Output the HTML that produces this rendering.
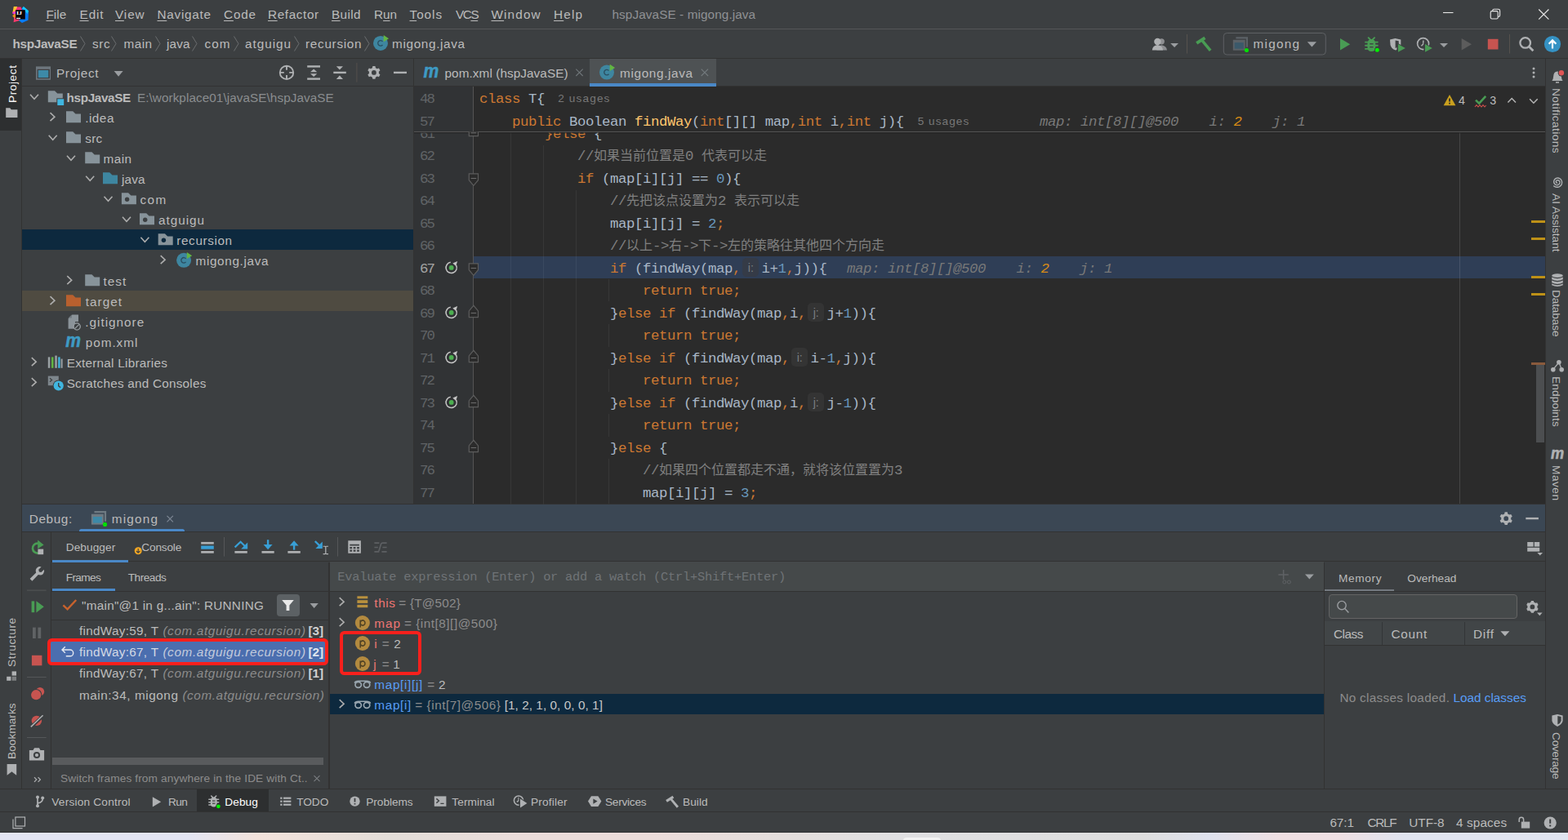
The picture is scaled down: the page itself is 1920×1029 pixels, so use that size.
<!DOCTYPE html><html><head><meta charset="utf-8"><title>hspJavaSE - migong.java</title><style>

html,body{margin:0;padding:0;background:#3c3f41;}
#r{position:relative;width:1920px;height:1029px;overflow:hidden;background:#3c3f41;font-family:"Liberation Sans",sans-serif;color:#bbb;}
#r div,#r svg,#r .t{position:absolute;}
.t{white-space:pre;line-height:20px;height:20px;}
.cjt{font-family:"Liberation Mono","Noto Sans CJK SC",monospace;font-size:16px;letter-spacing:0;}
u{text-decoration:underline;text-underline-offset:2px;text-decoration-thickness:1px;}

</style></head><body><div id="r">
<div style="left:0px;top:35px;width:1920px;height:1px;background:#555759;"></div>
<div style="left:0px;top:71px;width:1920px;height:1px;background:#323232;"></div>
<div style="left:0px;top:72px;width:26px;height:895px;background:#3c3f41;"></div>
<div style="left:26px;top:72px;width:1px;height:895px;background:#323232;"></div>
<div style="left:0px;top:72px;width:26px;height:88px;background:#2d2f30;"></div>
<div style="left:1892px;top:72px;width:1px;height:895px;background:#323232;"></div>
<div style="left:27px;top:105px;width:480px;height:1px;background:#323232;"></div>
<div style="left:506px;top:72px;width:1px;height:546px;background:#323232;"></div>
<div style="left:507px;top:106px;width:1385px;height:512px;background:#2b2b2b;"></div>
<div style="left:507px;top:106px;width:73px;height:512px;background:#313335;"></div>
<div style="left:579px;top:106px;width:1px;height:512px;background:#555555;"></div>
<div style="left:507px;top:105px;width:1385px;height:1px;background:#323232;"></div>
<div style="left:722px;top:72px;width:155px;height:34px;background:#4e5254;"></div>
<div style="left:722px;top:102px;width:155px;height:4px;background:#4a88c7;"></div>
<div style="left:1787px;top:162px;width:1px;height:456px;background:#464646;"></div>
<div style="left:1787px;top:314px;width:1px;height:27px;background:#47536a;z-index:2;"></div>
<div style="left:27px;top:617px;width:1866px;height:1px;background:#323232;"></div>
<div style="left:27px;top:618px;width:1865px;height:33px;background:#3b4754;"></div>
<div style="left:27px;top:651px;width:1865px;height:1px;background:#323232;"></div>
<div style="left:62px;top:652px;width:1px;height:315px;background:#323232;"></div>
<div style="left:63px;top:687px;width:1829px;height:1px;background:#323232;"></div>
<div style="left:402px;top:689px;width:2px;height:278px;background:#323232;"></div>
<div style="left:1621px;top:689px;width:1px;height:278px;background:#323232;"></div>
<div style="left:0px;top:966px;width:1920px;height:1px;background:#323232;"></div>
<div style="left:0px;top:994px;width:1920px;height:1px;background:#323232;"></div>
<div style="left:0px;top:1020px;width:1920px;height:9px;background:linear-gradient(90deg,#e3e5f3 0.00%,#e3e5f3 11.98%,#f3e2db 16.41%,#e3ddd8 25.00%,#ebdcda 33.33%,#ecdcda 41.67%,#e4dedc 50.00%,#e0e0e2 57.29%,#dedede 72.92%,#dfe2ee 77.08%,#f0dfe2 81.77%,#efdfe3 85.42%,#e0e4f0 89.58%,#e0e4f0 100.00%);"></div>
<div style="left:0px;top:1019px;width:1920px;height:1px;background:#2f3133;"></div>
<div style="left:1105.6px;top:1026.3px;width:46.4px;height:4px;background:#f3f3f3;border-radius:4px 4px 0 0;"></div>
<span class="t" style="left:56.5px;top:8.20px;font-size:15.3px;color:#bbbbbb;letter-spacing:0.009px;"><u>F</u>ile</span>
<span class="t" style="left:97.5px;top:8.20px;font-size:15.3px;color:#bbbbbb;letter-spacing:0.914px;"><u>E</u>dit</span>
<span class="t" style="left:141px;top:8.20px;font-size:15.3px;color:#bbbbbb;letter-spacing:0.903px;"><u>V</u>iew</span>
<span class="t" style="left:192.5px;top:8.20px;font-size:15.3px;color:#bbbbbb;letter-spacing:0.744px;"><u>N</u>avigate</span>
<span class="t" style="left:274px;top:8.20px;font-size:15.3px;color:#bbbbbb;letter-spacing:0.835px;"><u>C</u>ode</span>
<span class="t" style="left:328px;top:8.20px;font-size:15.3px;color:#bbbbbb;letter-spacing:0.610px;"><u>R</u>efactor</span>
<span class="t" style="left:406px;top:8.20px;font-size:15.3px;color:#bbbbbb;letter-spacing:0.396px;"><u>B</u>uild</span>
<span class="t" style="left:458px;top:8.20px;font-size:15.3px;color:#bbbbbb;letter-spacing:0.003px;">R<u>u</u>n</span>
<span class="t" style="left:501.5px;top:8.20px;font-size:15.3px;color:#bbbbbb;letter-spacing:0.970px;"><u>T</u>ools</span>
<span class="t" style="left:558px;top:8.20px;font-size:15.3px;color:#bbbbbb;letter-spacing:-1.427px;">VC<u>S</u></span>
<span class="t" style="left:601.5px;top:8.20px;font-size:15.3px;color:#bbbbbb;letter-spacing:1.136px;"><u>W</u>indow</span>
<span class="t" style="left:678px;top:8.20px;font-size:15.3px;color:#bbbbbb;letter-spacing:1.205px;"><u>H</u>elp</span>
<span class="t" style="left:749.5px;top:8.20px;font-size:15.3px;color:#8f9194;letter-spacing:0.097px;">hspJavaSE - migong.java</span>
<span class="t" style="left:15.5px;top:44.00px;font-size:15.3px;color:#bbbbbb;font-weight:bold;letter-spacing:-0.318px;">hspJavaSE</span>
<span class="t" style="left:113px;top:44.00px;font-size:15.3px;color:#bbbbbb;letter-spacing:0.597px;">src</span>
<span class="t" style="left:151.5px;top:44.00px;font-size:15.3px;color:#bbbbbb;letter-spacing:0.481px;">main</span>
<span class="t" style="left:204px;top:44.00px;font-size:15.3px;color:#bbbbbb;letter-spacing:0.179px;">java</span>
<span class="t" style="left:250.5px;top:44.00px;font-size:15.3px;color:#bbbbbb;letter-spacing:1.097px;">com</span>
<span class="t" style="left:300px;top:44.00px;font-size:15.3px;color:#bbbbbb;letter-spacing:0.985px;">atguigu</span>
<span class="t" style="left:374px;top:44.00px;font-size:15.3px;color:#bbbbbb;letter-spacing:0.710px;">recursion</span>
<span class="t" style="left:480px;top:44.00px;font-size:15.3px;color:#bbbbbb;letter-spacing:0.662px;">migong.java</span>
<svg style="left:98px;top:44px;" width="7" height="19" viewBox="0 0 7 19"><polyline points="0.5,0.5 6,9.5 0.5,18.5" fill="none" stroke="#6b6e70" stroke-width="1"/></svg>
<svg style="left:136px;top:44px;" width="7" height="19" viewBox="0 0 7 19"><polyline points="0.5,0.5 6,9.5 0.5,18.5" fill="none" stroke="#6b6e70" stroke-width="1"/></svg>
<svg style="left:189.5px;top:44px;" width="7" height="19" viewBox="0 0 7 19"><polyline points="0.5,0.5 6,9.5 0.5,18.5" fill="none" stroke="#6b6e70" stroke-width="1"/></svg>
<svg style="left:235px;top:44px;" width="7" height="19" viewBox="0 0 7 19"><polyline points="0.5,0.5 6,9.5 0.5,18.5" fill="none" stroke="#6b6e70" stroke-width="1"/></svg>
<svg style="left:286px;top:44px;" width="7" height="19" viewBox="0 0 7 19"><polyline points="0.5,0.5 6,9.5 0.5,18.5" fill="none" stroke="#6b6e70" stroke-width="1"/></svg>
<svg style="left:360px;top:44px;" width="7" height="19" viewBox="0 0 7 19"><polyline points="0.5,0.5 6,9.5 0.5,18.5" fill="none" stroke="#6b6e70" stroke-width="1"/></svg>
<svg style="left:445.5px;top:44px;" width="7" height="19" viewBox="0 0 7 19"><polyline points="0.5,0.5 6,9.5 0.5,18.5" fill="none" stroke="#6b6e70" stroke-width="1"/></svg>
<span class="t" style="left:1534.6px;top:44.00px;font-size:15.3px;color:#bbbbbb;letter-spacing:1.246px;">migong</span>
<span class="t" style="left:69px;top:80.10px;font-size:15.3px;color:#bbbbbb;letter-spacing:0.665px;">Project</span>
<span class="t" style="left:544.5px;top:80.10px;font-size:15.3px;color:#bbbbbb;letter-spacing:0.082px;">pom.xml (hspJavaSE)</span>
<span class="t" style="left:759px;top:80.10px;font-size:15.3px;color:#bbbbbb;letter-spacing:0.662px;">migong.java</span>
<div style="left:27px;top:281px;width:479px;height:25px;background:#0d293e;"></div>
<div style="left:27px;top:356px;width:479px;height:25px;background:#4f4b41;"></div>
<span class="t" style="left:81.6px;top:109.70px;font-size:15.3px;color:#bbbbbb;font-weight:bold;letter-spacing:-0.368px;">hspJavaSE</span>
<span class="t" style="left:167.9px;top:109.70px;font-size:15.3px;color:#8a8d8f;letter-spacing:0.065px;">E:\workplace01\javaSE\hspJavaSE</span>
<span class="t" style="left:104.2px;top:134.70px;font-size:15.3px;color:#bbbbbb;letter-spacing:0.507px;">.idea</span>
<span class="t" style="left:104.2px;top:159.70px;font-size:15.3px;color:#bbbbbb;letter-spacing:0.297px;">src</span>
<span class="t" style="left:126.5px;top:184.70px;font-size:15.3px;color:#bbbbbb;letter-spacing:0.481px;">main</span>
<span class="t" style="left:149px;top:209.70px;font-size:15.3px;color:#bbbbbb;letter-spacing:0.146px;">java</span>
<span class="t" style="left:171.4px;top:234.70px;font-size:15.3px;color:#bbbbbb;letter-spacing:1.497px;">com</span>
<span class="t" style="left:194px;top:259.70px;font-size:15.3px;color:#bbbbbb;letter-spacing:0.985px;">atguigu</span>
<span class="t" style="left:216.3px;top:284.70px;font-size:15.3px;color:#bbbbbb;letter-spacing:0.610px;">recursion</span>
<span class="t" style="left:239.5px;top:309.70px;font-size:15.3px;color:#bbbbbb;letter-spacing:0.652px;">migong.java</span>
<span class="t" style="left:126.5px;top:334.70px;font-size:15.3px;color:#bbbbbb;letter-spacing:1.048px;">test</span>
<span class="t" style="left:104.8px;top:359.70px;font-size:15.3px;color:#bbbbbb;letter-spacing:1.035px;">target</span>
<span class="t" style="left:104.3px;top:384.70px;font-size:15.3px;color:#bbbbbb;letter-spacing:0.996px;">.gitignore</span>
<span class="t" style="left:104.8px;top:409.70px;font-size:15.3px;color:#bbbbbb;letter-spacing:0.951px;">pom.xml</span>
<span class="t" style="left:81.7px;top:434.70px;font-size:15.3px;color:#bbbbbb;letter-spacing:0.245px;">External Libraries</span>
<span class="t" style="left:81.7px;top:459.70px;font-size:15.3px;color:#bbbbbb;letter-spacing:0.228px;">Scratches and Consoles</span>
<div style="left:580px;top:314px;width:1312px;height:27px;background:#2f3e56;"></div>
<div style="left:625px;top:162px;width:1px;height:456px;background:#373737;"></div>
<div style="left:665px;top:178px;width:1px;height:440px;background:#373737;"></div>
<div style="left:705px;top:233px;width:1px;height:385px;background:#373737;"></div>
<div style="left:745px;top:342px;width:1px;height:27px;background:#373737;"></div>
<div style="left:745px;top:397.0px;width:1px;height:27.5px;background:#373737;"></div>
<div style="left:745px;top:452.0px;width:1px;height:27.5px;background:#373737;"></div>
<div style="left:745px;top:507.0px;width:1px;height:27.5px;background:#373737;"></div>
<div style="left:745px;top:562.0px;width:1px;height:27.5px;background:#373737;"></div>
<div style="left:745px;top:589.5px;width:1px;height:27.5px;background:#373737;"></div>
<div style="left:625px;top:314px;width:1px;height:27px;background:#3a4960;"></div>
<div style="left:665px;top:314px;width:1px;height:27px;background:#3a4960;"></div>
<div style="left:705px;top:314px;width:1px;height:27px;background:#3a4960;"></div>
<div style="left:0px;top:162px;width:1892px;height:10px;overflow:hidden">
<span class="t" style="left:514px;top:-7.24px;font-size:17.4px;color:#606366;font-family:'Liberation Mono',monospace;letter-spacing:-2.042px;">61</span>
<span class="t" style="left:667px;top:-7.24px;font-size:17.4px;color:#a9b7c6;font-family:'Liberation Mono',monospace;letter-spacing:-0.442px;"><span style="color:#cc7832">}else</span> {</span>
</div>
<span class="t" style="left:514px;top:182.26px;font-size:17.4px;color:#606366;font-family:'Liberation Mono',monospace;letter-spacing:-2.042px;">62</span>
<span class="t" style="left:707px;top:182.26px;font-size:17.4px;color:#a9b7c6;font-family:'Liberation Mono',monospace;letter-spacing:-0.442px;"><span style="color:#808080">//<span class="cjt">如果当前位置是</span>0 <span class="cjt">代表可以走</span></span></span>
<span class="t" style="left:514px;top:209.76px;font-size:17.4px;color:#606366;font-family:'Liberation Mono',monospace;letter-spacing:-2.042px;">63</span>
<span class="t" style="left:707px;top:209.76px;font-size:17.4px;color:#a9b7c6;font-family:'Liberation Mono',monospace;letter-spacing:-0.442px;"><span style="color:#cc7832">if</span> (map[i][j] == <span style="color:#6897bb">0</span>){</span>
<span class="t" style="left:514px;top:237.26px;font-size:17.4px;color:#606366;font-family:'Liberation Mono',monospace;letter-spacing:-2.042px;">64</span>
<span class="t" style="left:747px;top:237.26px;font-size:17.4px;color:#a9b7c6;font-family:'Liberation Mono',monospace;letter-spacing:-0.442px;"><span style="color:#808080">//<span class="cjt">先把该点设置为</span>2 <span class="cjt">表示可以走</span></span></span>
<span class="t" style="left:514px;top:264.76px;font-size:17.4px;color:#606366;font-family:'Liberation Mono',monospace;letter-spacing:-2.042px;">65</span>
<span class="t" style="left:747px;top:264.76px;font-size:17.4px;color:#a9b7c6;font-family:'Liberation Mono',monospace;letter-spacing:-0.442px;">map[i][j] = <span style="color:#6897bb">2</span><span style="color:#cc7832">;</span></span>
<span class="t" style="left:514px;top:292.26px;font-size:17.4px;color:#606366;font-family:'Liberation Mono',monospace;letter-spacing:-2.042px;">66</span>
<span class="t" style="left:747px;top:292.26px;font-size:17.4px;color:#a9b7c6;font-family:'Liberation Mono',monospace;letter-spacing:-0.442px;"><span style="color:#808080">//<span class="cjt">以上</span>-&gt;<span class="cjt">右</span>-&gt;<span class="cjt">下</span>-&gt;<span class="cjt">左的策略往其他四个方向走</span></span></span>
<span class="t" style="left:514px;top:319.76px;font-size:17.4px;color:#a4a3a3;font-family:'Liberation Mono',monospace;letter-spacing:-2.042px;">67</span>
<span class="t" style="left:747px;top:319.76px;font-size:17.4px;color:#a9b7c6;font-family:'Liberation Mono',monospace;letter-spacing:-0.442px;"><span style="color:#cc7832">if</span> (findWay(map<span style="color:#cc7832">,</span><span style="display:inline-block;width:25.5px;height:20px;vertical-align:top;letter-spacing:0;position:relative"><span style="position:absolute;left:2.5px;top:-3.7px;width:19.7px;height:23px;border-radius:5px;background:#353b47;color:#7a7d80;font:14.2px 'Liberation Sans',sans-serif;line-height:24.6px;text-align:center">i:</span></span>i+<span style="color:#6897bb">1</span><span style="color:#cc7832">,</span>j)){</span>
<span class="t" style="left:514px;top:347.26px;font-size:17.4px;color:#606366;font-family:'Liberation Mono',monospace;letter-spacing:-2.042px;">68</span>
<span class="t" style="left:787px;top:347.26px;font-size:17.4px;color:#a9b7c6;font-family:'Liberation Mono',monospace;letter-spacing:-0.442px;"><span style="color:#cc7832">return true;</span></span>
<span class="t" style="left:514px;top:374.76px;font-size:17.4px;color:#606366;font-family:'Liberation Mono',monospace;letter-spacing:-2.042px;">69</span>
<span class="t" style="left:747px;top:374.76px;font-size:17.4px;color:#a9b7c6;font-family:'Liberation Mono',monospace;letter-spacing:-0.442px;">}<span style="color:#cc7832">else if</span> (findWay(map<span style="color:#cc7832">,</span>i<span style="color:#cc7832">,</span><span style="display:inline-block;width:25.5px;height:20px;vertical-align:top;letter-spacing:0;position:relative"><span style="position:absolute;left:2.5px;top:-3.7px;width:19.7px;height:23px;border-radius:5px;background:#343434;color:#7a7d80;font:14.2px 'Liberation Sans',sans-serif;line-height:24.6px;text-align:center">j:</span></span>j+<span style="color:#6897bb">1</span>)){</span>
<span class="t" style="left:514px;top:402.26px;font-size:17.4px;color:#606366;font-family:'Liberation Mono',monospace;letter-spacing:-2.042px;">70</span>
<span class="t" style="left:787px;top:402.26px;font-size:17.4px;color:#a9b7c6;font-family:'Liberation Mono',monospace;letter-spacing:-0.442px;"><span style="color:#cc7832">return true;</span></span>
<span class="t" style="left:514px;top:429.76px;font-size:17.4px;color:#606366;font-family:'Liberation Mono',monospace;letter-spacing:-2.042px;">71</span>
<span class="t" style="left:747px;top:429.76px;font-size:17.4px;color:#a9b7c6;font-family:'Liberation Mono',monospace;letter-spacing:-0.442px;">}<span style="color:#cc7832">else if</span> (findWay(map<span style="color:#cc7832">,</span><span style="display:inline-block;width:25.5px;height:20px;vertical-align:top;letter-spacing:0;position:relative"><span style="position:absolute;left:2.5px;top:-3.7px;width:19.7px;height:23px;border-radius:5px;background:#343434;color:#7a7d80;font:14.2px 'Liberation Sans',sans-serif;line-height:24.6px;text-align:center">i:</span></span>i-<span style="color:#6897bb">1</span><span style="color:#cc7832">,</span>j)){</span>
<span class="t" style="left:514px;top:457.26px;font-size:17.4px;color:#606366;font-family:'Liberation Mono',monospace;letter-spacing:-2.042px;">72</span>
<span class="t" style="left:787px;top:457.26px;font-size:17.4px;color:#a9b7c6;font-family:'Liberation Mono',monospace;letter-spacing:-0.442px;"><span style="color:#cc7832">return true;</span></span>
<span class="t" style="left:514px;top:484.76px;font-size:17.4px;color:#606366;font-family:'Liberation Mono',monospace;letter-spacing:-2.042px;">73</span>
<span class="t" style="left:747px;top:484.76px;font-size:17.4px;color:#a9b7c6;font-family:'Liberation Mono',monospace;letter-spacing:-0.442px;">}<span style="color:#cc7832">else if</span> (findWay(map<span style="color:#cc7832">,</span>i<span style="color:#cc7832">,</span><span style="display:inline-block;width:25.5px;height:20px;vertical-align:top;letter-spacing:0;position:relative"><span style="position:absolute;left:2.5px;top:-3.7px;width:19.7px;height:23px;border-radius:5px;background:#343434;color:#7a7d80;font:14.2px 'Liberation Sans',sans-serif;line-height:24.6px;text-align:center">j:</span></span>j-<span style="color:#6897bb">1</span>)){</span>
<span class="t" style="left:514px;top:512.26px;font-size:17.4px;color:#606366;font-family:'Liberation Mono',monospace;letter-spacing:-2.042px;">74</span>
<span class="t" style="left:787px;top:512.26px;font-size:17.4px;color:#a9b7c6;font-family:'Liberation Mono',monospace;letter-spacing:-0.442px;"><span style="color:#cc7832">return true;</span></span>
<span class="t" style="left:514px;top:539.76px;font-size:17.4px;color:#606366;font-family:'Liberation Mono',monospace;letter-spacing:-2.042px;">75</span>
<span class="t" style="left:747px;top:539.76px;font-size:17.4px;color:#a9b7c6;font-family:'Liberation Mono',monospace;letter-spacing:-0.442px;">}<span style="color:#cc7832">else</span> {</span>
<span class="t" style="left:514px;top:567.26px;font-size:17.4px;color:#606366;font-family:'Liberation Mono',monospace;letter-spacing:-2.042px;">76</span>
<span class="t" style="left:787px;top:567.26px;font-size:17.4px;color:#a9b7c6;font-family:'Liberation Mono',monospace;letter-spacing:-0.442px;"><span style="color:#808080">//<span class="cjt">如果四个位置都走不通，就将该位置置为</span>3</span></span>
<span class="t" style="left:514px;top:594.76px;font-size:17.4px;color:#606366;font-family:'Liberation Mono',monospace;letter-spacing:-2.042px;">77</span>
<span class="t" style="left:787px;top:594.76px;font-size:17.4px;color:#a9b7c6;font-family:'Liberation Mono',monospace;letter-spacing:-0.442px;">map[i][j] = <span style="color:#6897bb">3</span><span style="color:#cc7832">;</span></span>
<span class="t" style="left:1037px;top:319.76px;font-size:17.4px;color:#787878;font-family:'Liberation Mono',monospace;font-style:italic;letter-spacing:-0.442px;">map: int[8][]@500</span>
<span class="t" style="left:1244.5px;top:319.76px;font-size:17.4px;color:#787878;font-family:'Liberation Mono',monospace;font-style:italic;letter-spacing:-0.442px;">i: <span style="color:#d78b16">2</span></span>
<span class="t" style="left:1322px;top:319.76px;font-size:17.4px;color:#787878;font-family:'Liberation Mono',monospace;font-style:italic;letter-spacing:-0.442px;">j: 1</span>
<div style="left:507px;top:161px;width:1385px;height:1px;background:#555555;"></div>
<div style="left:507px;top:162px;width:1385px;height:2px;background:linear-gradient(#232323,#2b2b2b00);"></div>
<span class="t" style="left:514px;top:112.26px;font-size:17.4px;color:#606366;font-family:'Liberation Mono',monospace;letter-spacing:-2.042px;">48</span>
<span class="t" style="left:514px;top:140.26px;font-size:17.4px;color:#606366;font-family:'Liberation Mono',monospace;letter-spacing:-2.042px;">57</span>
<span class="t" style="left:587px;top:112.26px;font-size:17.4px;color:#a9b7c6;font-family:'Liberation Mono',monospace;letter-spacing:-0.442px;"><span style="color:#cc7832">class</span> T{</span>
<span class="t" style="left:683.2px;top:111.29px;font-size:13.6px;color:#787878;letter-spacing:1.147px;">2 usages</span>
<span class="t" style="left:627px;top:140.26px;font-size:17.4px;color:#a9b7c6;font-family:'Liberation Mono',monospace;letter-spacing:-0.442px;"><span style="color:#cc7832">public</span> Boolean <span style="color:#ffc66d">findWay</span>(<span style="color:#cc7832">int</span>[][] map<span style="color:#cc7832">,int</span> i<span style="color:#cc7832">,int</span> j){</span>
<span class="t" style="left:1123.7px;top:139.29px;font-size:13.6px;color:#787878;letter-spacing:1.047px;">5 usages</span>
<span class="t" style="left:1273px;top:140.26px;font-size:17.4px;color:#787878;font-family:'Liberation Mono',monospace;font-style:italic;letter-spacing:-0.442px;">map: int[8][]@500</span>
<span class="t" style="left:1480.5px;top:140.26px;font-size:17.4px;color:#787878;font-family:'Liberation Mono',monospace;font-style:italic;letter-spacing:-0.442px;">i: <span style="color:#d78b16">2</span></span>
<span class="t" style="left:1558px;top:140.26px;font-size:17.4px;color:#787878;font-family:'Liberation Mono',monospace;font-style:italic;letter-spacing:-0.442px;">j: 1</span>
<span class="t" style="left:1786px;top:113.08px;font-size:14.2px;color:#bbbbbb;letter-spacing:1.709px;">4</span>
<span class="t" style="left:1824.3px;top:113.08px;font-size:14.2px;color:#bbbbbb;letter-spacing:1.409px;">3</span>
<div style="left:1875px;top:270px;width:17px;height:3px;background:#be9117;"></div>
<div style="left:1875px;top:291px;width:17px;height:3px;background:#be9117;"></div>
<div style="left:1875px;top:359px;width:17px;height:3px;background:#be9117;"></div>
<div style="left:1875px;top:337.6px;width:17px;height:3px;background:#be9117;"></div>
<div style="left:1875px;top:444px;width:17px;height:3px;background:#8a5a3c;"></div>
<div style="left:1881px;top:447px;width:10px;height:95px;background:#4c4e50;"></div>
<span class="t" style="left:35.7px;top:626.40px;font-size:15.3px;color:#bbbbbb;letter-spacing:0.654px;">Debug:</span>
<span class="t" style="left:136.7px;top:626.40px;font-size:15.3px;color:#bbbbbb;letter-spacing:1.206px;">migong</span>
<div style="left:97px;top:648px;width:129.4px;height:3px;background:#4a88c7;border-radius:2.5px 2.5px 0 0;"></div>
<span class="t" style="left:80.7px;top:661.45px;font-size:13.7px;color:#bbbbbb;letter-spacing:0.068px;">Debugger</span>
<span class="t" style="left:173.3px;top:661.45px;font-size:13.7px;color:#bbbbbb;letter-spacing:-0.203px;">Console</span>
<div style="left:64px;top:686px;width:93px;height:3px;background:#4a88c7;"></div>
<span class="t" style="left:80.7px;top:698.25px;font-size:13.7px;color:#bbbbbb;letter-spacing:-0.638px;">Frames</span>
<span class="t" style="left:156.7px;top:698.25px;font-size:13.7px;color:#bbbbbb;letter-spacing:-0.503px;">Threads</span>
<div style="left:64px;top:721px;width:77px;height:3px;background:#4a88c7;"></div>
<div style="left:63px;top:724px;width:339px;height:1px;background:#323232;"></div>
<span class="t" style="left:100px;top:732.00px;font-size:15.3px;color:#bbbbbb;letter-spacing:0.266px;">"main"@1 in g...ain": RUNNING</span>
<div style="left:338.5px;top:727.5px;width:28px;height:27.5px;background:#5c6164;border-radius:4px;"></div>
<div style="left:63px;top:759px;width:339px;height:1px;background:#323232;"></div>
<div style="left:58.2px;top:782px;width:344px;height:32.8px;background:#4b6eaf;box-sizing:border-box;border:4.3px solid #f8201c;border-radius:5.5px;"></div>
<span class="t" style="left:96.9px;top:763.00px;font-size:15.3px;color:#bbbbbb;letter-spacing:0.297px;">findWay:59, T</span>
<span class="t" style="left:199.4px;top:763.00px;font-size:15.3px;color:#8c8c8c;font-style:italic;letter-spacing:0.632px;">(com.atguigu.recursion)</span>
<span class="t" style="left:377.6px;top:763.00px;font-size:15.3px;color:#d0d0d0;font-weight:bold;letter-spacing:-0.152px;">[3]</span>
<span class="t" style="left:96.9px;top:789.00px;font-size:15.3px;color:#d3d9e4;letter-spacing:0.297px;">findWay:67, T</span>
<span class="t" style="left:199.4px;top:789.00px;font-size:15.3px;color:#c3cbdc;font-style:italic;letter-spacing:0.632px;">(com.atguigu.recursion)</span>
<span class="t" style="left:377.6px;top:789.00px;font-size:15.3px;color:#dfe4ee;font-weight:bold;letter-spacing:-0.152px;">[2]</span>
<span class="t" style="left:96.9px;top:815.20px;font-size:15.3px;color:#bbbbbb;letter-spacing:0.297px;">findWay:67, T</span>
<span class="t" style="left:199.4px;top:815.20px;font-size:15.3px;color:#8c8c8c;font-style:italic;letter-spacing:0.632px;">(com.atguigu.recursion)</span>
<span class="t" style="left:377.6px;top:815.20px;font-size:15.3px;color:#d0d0d0;font-weight:bold;letter-spacing:-0.152px;">[1]</span>
<span class="t" style="left:96.9px;top:841.90px;font-size:15.3px;color:#bbbbbb;letter-spacing:0.565px;">main:34, migong</span>
<span class="t" style="left:223.4px;top:841.90px;font-size:15.3px;color:#8c8c8c;font-style:italic;letter-spacing:0.582px;">(com.atguigu.recursion)</span>
<div style="left:64px;top:927.5px;width:332px;height:9.5px;background:#595b5d;"></div>
<span class="t" style="left:74px;top:943.55px;font-size:13.7px;color:#8c8c8c;letter-spacing:0.110px;">Switch frames from anywhere in the IDE with Ct..</span>
<div style="left:404px;top:688px;width:1217px;height:36px;background:#45494a;"></div>
<div style="left:404px;top:724px;width:1217px;height:1px;background:#323232;"></div>
<span class="t" style="left:413.3px;top:696.50px;font-size:15.4px;color:#6f7376;font-family:'Liberation Mono',monospace;letter-spacing:-0.242px;">Evaluate expression (Enter) or add a watch (Ctrl+Shift+Enter)</span>
<div style="left:404px;top:850px;width:1217px;height:25px;background:#0d293e;"></div>
<span class="t" style="left:458.3px;top:728.70px;font-size:15.3px;color:#ee7673;letter-spacing:0.596px;">this</span>
<span class="t" style="left:488.3px;top:728.70px;font-size:15.3px;color:#8c8c8c;letter-spacing:0.225px;">= {T@502}</span>
<span class="t" style="left:458.3px;top:753.70px;font-size:15.3px;color:#ee7673;letter-spacing:0.917px;">map</span>
<span class="t" style="left:495px;top:753.70px;font-size:15.3px;color:#8c8c8c;letter-spacing:0.518px;">= {int[8][]@500}</span>
<span class="t" style="left:458.3px;top:778.70px;font-size:15.3px;color:#ee7673;letter-spacing:0.894px;">i</span>
<span class="t" style="left:467.7px;top:778.70px;font-size:15.3px;color:#8c8c8c;letter-spacing:-0.237px;">=</span>
<span class="t" style="left:482.3px;top:778.70px;font-size:15.3px;color:#bbbbbb;letter-spacing:-0.916px;">2</span>
<span class="t" style="left:457.3px;top:803.70px;font-size:15.3px;color:#ee7673;letter-spacing:1.894px;">j</span>
<span class="t" style="left:467.7px;top:803.70px;font-size:15.3px;color:#8c8c8c;letter-spacing:-0.237px;">=</span>
<span class="t" style="left:481.2px;top:803.70px;font-size:15.3px;color:#bbbbbb;letter-spacing:-1.316px;">1</span>
<span class="t" style="left:458.3px;top:828.70px;font-size:15.3px;color:#589df6;letter-spacing:0.680px;">map[i][j]</span>
<span class="t" style="left:523.3px;top:828.70px;font-size:15.3px;color:#bbbbbb;letter-spacing:0.298px;"><span style="color:#8c8c8c">=</span> 2</span>
<span class="t" style="left:458.3px;top:853.70px;font-size:15.3px;color:#589df6;letter-spacing:0.669px;">map[i]</span>
<span class="t" style="left:508.3px;top:853.70px;font-size:15.3px;color:#8c8c8c;letter-spacing:0.537px;">= {int[7]@506}</span>
<span class="t" style="left:617.7px;top:853.70px;font-size:15.3px;color:#c8c8c8;letter-spacing:0.057px;">[1, 2, 1, 0, 0, 0, 1]</span>
<div style="left:416px;top:772.9px;width:100px;height:54.2px;box-sizing:border-box;border:4px solid #f8201c;border-radius:5.5px;"></div>
<span class="t" style="left:1639px;top:698.85px;font-size:13.7px;color:#bbbbbb;letter-spacing:0.633px;">Memory</span>
<span class="t" style="left:1723.3px;top:698.85px;font-size:13.7px;color:#bbbbbb;letter-spacing:-0.004px;">Overhead</span>
<div style="left:1622px;top:721.5px;width:85px;height:2.5px;background:#747a80;"></div>
<div style="left:1622px;top:724px;width:270px;height:1px;background:#323232;"></div>
<div style="left:1626.5px;top:727.5px;width:231px;height:30px;background:#45494a;box-sizing:border-box;border:1px solid #646464;border-radius:4px;"></div>
<div style="left:1622px;top:761px;width:270px;height:30px;background:#414547;"></div>
<div style="left:1622px;top:790px;width:270px;height:1px;background:#323232;"></div>
<div style="left:1692px;top:762px;width:1px;height:28px;background:#323537;"></div>
<div style="left:1793px;top:762px;width:1px;height:28px;background:#323537;"></div>
<span class="t" style="left:1633px;top:766.70px;font-size:15.3px;color:#bbbbbb;letter-spacing:-0.487px;">Class</span>
<span class="t" style="left:1703.5px;top:766.70px;font-size:15.3px;color:#bbbbbb;letter-spacing:0.743px;">Count</span>
<span class="t" style="left:1803.9px;top:766.70px;font-size:15.3px;color:#bbbbbb;letter-spacing:0.809px;">Diff</span>
<span class="t" style="left:1640.4px;top:844.70px;font-size:15.3px;color:#8c8c8c;letter-spacing:0.309px;">No classes loaded.</span>
<span class="t" style="left:1779.4px;top:844.70px;font-size:15.3px;color:#589df6;letter-spacing:0.018px;">Load classes</span>
<div style="left:241px;top:967px;width:88px;height:27px;background:#2d2f30;"></div>
<span class="t" style="left:63.3px;top:973.45px;font-size:13.7px;color:#bbbbbb;letter-spacing:0.193px;">Version Control</span>
<span class="t" style="left:206px;top:973.45px;font-size:13.7px;color:#bbbbbb;letter-spacing:-0.605px;">Run</span>
<span class="t" style="left:275.3px;top:973.45px;font-size:13.7px;color:#ffffff;letter-spacing:0.064px;">Debug</span>
<span class="t" style="left:363.3px;top:973.45px;font-size:13.7px;color:#bbbbbb;letter-spacing:-0.099px;">TODO</span>
<span class="t" style="left:448.3px;top:973.45px;font-size:13.7px;color:#bbbbbb;letter-spacing:-0.073px;">Problems</span>
<span class="t" style="left:553.3px;top:973.45px;font-size:13.7px;color:#bbbbbb;letter-spacing:0.081px;">Terminal</span>
<span class="t" style="left:650px;top:973.45px;font-size:13.7px;color:#bbbbbb;letter-spacing:0.177px;">Profiler</span>
<span class="t" style="left:741px;top:973.45px;font-size:13.7px;color:#bbbbbb;letter-spacing:-0.269px;">Services</span>
<span class="t" style="left:836px;top:973.45px;font-size:13.7px;color:#bbbbbb;letter-spacing:0.041px;">Build</span>
<span class="t" style="left:1628.4px;top:997.90px;font-size:15.3px;color:#bbbbbb;letter-spacing:-0.027px;">67:1</span>
<span class="t" style="left:1674.4px;top:997.90px;font-size:15.3px;color:#bbbbbb;letter-spacing:-1.251px;">CRLF</span>
<span class="t" style="left:1725.3px;top:997.90px;font-size:15.3px;color:#bbbbbb;letter-spacing:-0.011px;">UTF-8</span>
<span class="t" style="left:1782.9px;top:997.90px;font-size:15.3px;color:#bbbbbb;letter-spacing:0.152px;">4 spaces</span>
<div style="left:20.6px;top:125.6px;width:0;height:0;transform:rotate(-90deg);transform-origin:0 0">
<span class="t" style="left:0px;top:-14.75px;font-size:13.7px;color:#f4f4f4;letter-spacing:0.565px;">Project</span>
</div>
<div style="left:20px;top:816.6px;width:0;height:0;transform:rotate(-90deg);transform-origin:0 0">
<span class="t" style="left:0px;top:-14.75px;font-size:13.7px;color:#bbbbbb;letter-spacing:0.582px;">Structure</span>
</div>
<div style="left:20px;top:930px;width:0;height:0;transform:rotate(-90deg);transform-origin:0 0">
<span class="t" style="left:0px;top:-14.75px;font-size:13.7px;color:#bbbbbb;letter-spacing:0.016px;">Bookmarks</span>
</div>
<div style="left:1900px;top:108px;width:0;height:0;transform:rotate(90deg);transform-origin:0 0">
<span class="t" style="left:0px;top:-14.75px;font-size:13.7px;color:#bbbbbb;letter-spacing:0.420px;">Notifications</span>
</div>
<div style="left:1900px;top:237px;width:0;height:0;transform:rotate(90deg);transform-origin:0 0">
<span class="t" style="left:0px;top:-14.75px;font-size:13.7px;color:#bbbbbb;letter-spacing:0.008px;">AI Assistant</span>
</div>
<div style="left:1900px;top:355px;width:0;height:0;transform:rotate(90deg);transform-origin:0 0">
<span class="t" style="left:0px;top:-14.75px;font-size:13.7px;color:#bbbbbb;letter-spacing:-0.142px;">Database</span>
</div>
<div style="left:1900px;top:460.8px;width:0;height:0;transform:rotate(90deg);transform-origin:0 0">
<span class="t" style="left:0px;top:-14.75px;font-size:13.7px;color:#bbbbbb;letter-spacing:0.114px;">Endpoints</span>
</div>
<div style="left:1900px;top:570px;width:0;height:0;transform:rotate(90deg);transform-origin:0 0">
<span class="t" style="left:0px;top:-14.75px;font-size:13.7px;color:#bbbbbb;letter-spacing:0.477px;">Maven</span>
</div>
<div style="left:1900px;top:897px;width:0;height:0;transform:rotate(90deg);transform-origin:0 0">
<span class="t" style="left:0px;top:-14.75px;font-size:13.7px;color:#bbbbbb;letter-spacing:-0.251px;">Coverage</span>
</div>
<svg style="left:0;top:0" width="1920" height="1029" viewBox="0 0 1920 1029"><polygon fill="#087cfa" points="26.5,10.5 28.8,8.1 35,13.3 34.5,24.7 27,28 22.8,25 22.8,18 26.5,18"/><polygon fill="#12c8f6" points="28.8,8.1 35,13.3 33.6,17 29.5,12 27,10.6"/><polygon fill="#fe2d7a" points="20.9,8.4 25.4,8.4 27,12 27,18 15.4,16.5 15.2,14.5 19,11"/><polygon fill="#fdc232" points="16.8,8.1 21.2,8.1 20,11 17.5,14.8 15.6,14.4"/><polygon fill="#e43ad0" points="15.2,15.4 19.5,13.6 19.5,17.5 16,17.2"/><polygon fill="#fb8c1e" points="15.2,19.5 17.5,17.2 19.5,17 19.5,23 17.5,22"/><polygon fill="#fe3a6c" points="17.4,21.5 19.5,21 24,24 23.4,25.2 16.6,27.3"/><rect x="19.1" y="12.2" width="11.7" height="11.4" fill="#0a0508"/><rect x="20.1" y="21.8" width="4.9" height="1.3" fill="#e8e8e8"/><text x="20" y="17.9" font-family="Liberation Serif,serif" font-weight="bold" font-size="6.8" textLength="7" lengthAdjust="spacingAndGlyphs" fill="#fff">IJ</text><path d="M1767,15.5 h12.5" stroke="#e8e8e8" stroke-width="1.1"/><rect x="1825.2" y="13.6" width="9" height="9.4" rx="1.6" fill="none" stroke="#e8e8e8" stroke-width="1.1"/><path d="M1827.7,13.4 v-0.3 q0,-1.8 1.8,-1.8 h5.2 q1.9,0 1.9,1.9 v5.6 q0,1.7 -1.7,1.7 h-0.6" fill="none" stroke="#e8e8e8" stroke-width="1.1"/><path d="M1884.2,11.5 L1896.4,23.6 M1896.4,11.5 L1884.2,23.6" stroke="#e8e8e8" stroke-width="1.15" fill="none"/><circle cx="466" cy="52.9" r="9" fill="#3e86a0"/><path d="M468.5,50.8 a3.25,3.25 0 1,0 0,4.2" fill="none" stroke="#2a4e60" stroke-width="1.35"/><polygon points="469.7,43.099999999999994 476.1,47.35 469.7,51.199999999999996" fill="#62b543"/><g fill="#afb1b3"><circle cx="1422.3" cy="50.800000000000004" r="3.6" opacity="0.7"/><path d="M1416.3,61.5 q0.5,-5.3 6,-6.2 q6,0.9 6.7,6.2z" opacity="0.7"/><circle cx="1417.3999999999999" cy="51.0" r="4.2"/><path d="M1410.8,61.5 q0.4,-5.6 6.6,-6.4 q6.2,0.8 6.6,6.4z"/></g><polygon fill="#9a9da0" points="1433.2,53 1443,53 1438.1,58"/><rect x="1453" y="42" width="1" height="23.5" fill="#56524e"/><g transform="translate(1464.2,44.8) scale(1)" fill="#499c54"><polygon points="0,6.4 10.2,0 12.3,3.3 2.1,9.8"/><polygon points="6.3,5.6 9.1,3.8 19.3,15.9 16.6,18.2"/></g><rect x="1498.3" y="40.5" width="125" height="26.5" rx="4" fill="none" stroke="#5e6164" stroke-width="1"/><path d="M1513.3999999999999,45.2 h14.6 v12.6 h-2.2 v-10.4 h-12.4z" fill="#5b6166"/><rect x="1509.8" y="48.800000000000004" width="14.9" height="12.9" fill="#5b6166"/><rect x="1511.7" y="52.1" width="11.1" height="7.6" fill="#3b596a"/><circle cx="1526.3999999999999" cy="61.5" r="2.6" fill="#00e000"/><polygon fill="#9a9da0" points="1600.8,51.2 1612,51.2 1606.4,57.4"/><polygon fill="#499c54" points="1641,47.1 1653.2,54.3 1641,61.5"/><g transform="translate(1670.8,45.7) scale(1)"><path d="M4.8,0.5 L7.6,3.3 M12.3,0.5 L9.5,3.3 M1.2,5.9 H16 M1.2,10.1 H16 M1.2,14.2 H16" stroke="#499c54" stroke-width="1.9" stroke-linecap="round" fill="none"/><path d="M8.55,2.4 q4.9,0 4.9,6 v3.6 q0,5.4 -4.9,5.4 q-4.9,0 -4.9,-5.4 v-3.6 q0,-6 4.9,-6z" fill="#499c54"/><rect x="6.4" y="7.4" width="4.3" height="1.3" fill="#3c3f41"/><rect x="6.4" y="11.3" width="4.3" height="1.3" fill="#3c3f41"/><circle cx="15.5" cy="15.5" r="3.3" fill="#3c3f41"/><circle cx="15.5" cy="15.5" r="2.5" fill="#00f000"/></g><path d="M1702,48.6 L1708.4,47.1 L1715.3,48.6 V55 q-1,4.6 -6.4,6.5 q-5.4,-1.9 -6.4,-6.5z" fill="#afb1b3"/><path d="M1708.6,49.4 L1712.7,50.3 V55 q-0.6,2.8 -4.1,4.3z" fill="#3c3f41"/><polygon points="1710.4,52.2 1722.6,58.9 1710.4,65.6" fill="#3c3f41"/><polygon fill="#499c54" points="1712,54 1720.8,58.9 1712,63.8"/><circle cx="1742.6" cy="53.6" r="7" fill="none" stroke="#afb1b3" stroke-width="1.6"/><path d="M1742.8,49.4 v4.6 l-2.4,2.2" stroke="#afb1b3" stroke-width="1.4" fill="none"/><polygon points="1743.4,52.2 1755.6,58.9 1743.4,65.6" fill="#3c3f41"/><polygon fill="#499c54" points="1745,54 1753.8,58.9 1745,63.8"/><polygon fill="#9a9da0" points="1763,53 1773,53 1768.0,58"/><polygon fill="#5c5c5c" points="1789.7,47.1 1802,54.3 1789.7,61.5"/><rect x="1821.8" y="47.8" width="12.7" height="12.7" fill="#c75450"/><rect x="1848" y="42" width="1" height="23.5" fill="#56524e"/><circle cx="1867.7" cy="52.4" r="6.3" fill="none" stroke="#afb1b3" stroke-width="2.3"/><path d="M1872.4,57.2 L1877.4,62.2" stroke="#afb1b3" stroke-width="2.7"/><circle cx="1901" cy="54" r="10.1" fill="#3592c4"/><path d="M1901,59.6 V49.6 M1896.6,53.8 L1901,49.4 L1905.4,53.8" stroke="#fff" stroke-width="2.2" fill="none"/><rect x="44" y="81.4" width="18" height="16.4" fill="#6d767d"/><rect x="45.6" y="84.8" width="15.3" height="11.4" fill="#3c3f41"/><rect x="46.8" y="86" width="12.5" height="9.1" fill="#3d8aa8"/><polygon fill="#9a9da0" points="139.6,87.1 150.6,87.1 145.1,93.8"/><circle cx="351" cy="88.9" r="8.2" fill="none" stroke="#afb1b3" stroke-width="1.9"/><path d="M351,80.7 v5 M351,97.1 v-5 M342.8,88.9 h5 M359.2,88.9 h-5" stroke="#afb1b3" stroke-width="1.9"/><g fill="#afb1b3"><rect x="376.2" y="80.2" width="15.8" height="2.4"/><rect x="376.2" y="95.4" width="15.8" height="2.4"/><polygon points="380,88.2 388.3,88.2 384.15,84.4"/><polygon points="380,90.2 388.3,90.2 384.15,94"/></g><g fill="#afb1b3"><rect x="408.3" y="87.7" width="15.5" height="2.4"/><polygon points="411.8,81.2 420,81.2 415.9,85.6"/><polygon points="411.8,97 420,97 415.9,92.6"/></g><rect x="436.4" y="77" width="1" height="23.6" fill="#55504c"/><path fill-rule="evenodd" fill="#afb1b3" d="M455.87,83.15 L456.31,81.06 L459.49,81.06 L459.93,83.15 L461.86,84.26 L463.90,83.60 L465.48,86.36 L463.90,87.79 L463.90,90.01 L465.48,91.44 L463.90,94.20 L461.86,93.54 L459.93,94.65 L459.49,96.74 L456.31,96.74 L455.87,94.65 L453.94,93.54 L451.90,94.20 L450.32,91.44 L451.90,90.01 L451.90,87.79 L450.32,86.36 L451.90,83.60 L453.94,84.26Z M455.00,88.90 a2.9,2.9 0 1,0 5.8,0 a2.9,2.9 0 1,0 -5.8,0Z"/><rect x="482" y="87.7" width="16" height="2.4" fill="#afb1b3"/><text x="518.4" y="95.0" font-family="Liberation Sans,sans-serif" font-size="23.4" font-weight="bold" font-style="italic" textLength="18.8" lengthAdjust="spacingAndGlyphs" fill="#3e9ac4" stroke="#3e9ac4" stroke-width="0.55">m</text><path d="M705.3,84.6 L713.7,93.0 M713.7,84.6 L705.3,93.0" stroke="#6e7578" stroke-width="1.1" fill="none"/><circle cx="743" cy="88.6" r="9" fill="#3e86a0"/><path d="M745.5,86.5 a3.25,3.25 0 1,0 0,4.2" fill="none" stroke="#2a4e60" stroke-width="1.35"/><polygon points="746.7,78.8 753.1,83.05 746.7,86.89999999999999" fill="#62b543"/><path d="M858.6999999999999,84.6 L867.1,93.0 M867.1,84.6 L858.6999999999999,93.0" stroke="#737a7d" stroke-width="1.1" fill="none"/><g fill="#afb1b3"><circle cx="1878" cy="83.9" r="1.5"/><circle cx="1878" cy="89" r="1.5"/><circle cx="1878" cy="94.1" r="1.5"/></g><polyline points="37,115.8 42,121.2 47,115.8" fill="none" stroke="#adadad" stroke-width="1.6"/><path d="M58.8,111.3 h8.2 l3.3,3.3 h6.5 v10.7 h-18z" fill="#87939a"/><rect x="69.3" y="120.3" width="9.9" height="9.7" fill="#3c3f41"/><rect x="70.3" y="121.3" width="7.9" height="7.7" fill="#40b6e0"/><polyline points="61.5,138.2 66.9,143.2 61.5,148.2" fill="none" stroke="#adadad" stroke-width="1.6"/><path d="M81,136.3 h8.2 l3.3,3.3 h6.5 v10.7 h-18z" fill="#87939a"/><polyline points="59.7,165.8 64.7,171.2 69.7,165.8" fill="none" stroke="#adadad" stroke-width="1.6"/><path d="M81,161.3 h8.2 l3.3,3.3 h6.5 v10.7 h-18z" fill="#87939a"/><polyline points="82,190.8 87,196.2 92,190.8" fill="none" stroke="#adadad" stroke-width="1.6"/><path d="M104.2,186.3 h8.2 l3.3,3.3 h6.5 v10.7 h-18z" fill="#87939a"/><polyline points="105.2,215.8 110.2,221.2 115.2,215.8" fill="none" stroke="#adadad" stroke-width="1.6"/><path d="M126,211.3 h8.2 l3.3,3.3 h6.5 v10.7 h-18z" fill="#3e86a0"/><polyline points="127.5,240.8 132.5,246.2 137.5,240.8" fill="none" stroke="#adadad" stroke-width="1.6"/><path d="M148.9,236.3 h8.2 l3.3,3.3 h6.5 v10.7 h-18z" fill="#87939a"/><circle cx="155.6" cy="244.3" r="2.7" fill="#3c3f41"/><polyline points="150,265.8 155,271.2 160,265.8" fill="none" stroke="#adadad" stroke-width="1.6"/><path d="M171,261.3 h8.2 l3.3,3.3 h6.5 v10.7 h-18z" fill="#87939a"/><circle cx="177.7" cy="269.3" r="2.7" fill="#3c3f41"/><polyline points="172.4,290.8 177.4,296.2 182.4,290.8" fill="none" stroke="#adadad" stroke-width="1.6"/><path d="M193.7,286.3 h8.2 l3.3,3.3 h6.5 v10.7 h-18z" fill="#87939a"/><circle cx="200.39999999999998" cy="294.3" r="2.7" fill="#0d293e"/><polyline points="196.70000000000002,313.2 202.1,318.2 196.70000000000002,323.2" fill="none" stroke="#adadad" stroke-width="1.6"/><circle cx="225.1" cy="318.8" r="9" fill="#3e86a0"/><path d="M227.6,316.7 a3.25,3.25 0 1,0 0,4.2" fill="none" stroke="#2a4e60" stroke-width="1.35"/><polygon points="228.79999999999998,309.0 235.2,313.25 228.79999999999998,317.1" fill="#62b543"/><polyline points="82.3,338.2 87.7,343.2 82.3,348.2" fill="none" stroke="#adadad" stroke-width="1.6"/><path d="M104.2,336.3 h8.2 l3.3,3.3 h6.5 v10.7 h-18z" fill="#87939a"/><polyline points="61.5,363.2 66.9,368.2 61.5,373.2" fill="none" stroke="#adadad" stroke-width="1.6"/><path d="M81,361.3 h8.2 l3.3,3.3 h6.5 v10.7 h-18z" fill="#b9602e"/><path d="M88.4,385.4 h7.6 v8.6 h-4 v8.7 h-8.4 v-12.5z" fill="#8b9399"/><path d="M83.6,389.6 l4.2,-4.2 v4.2z" fill="#6f777d"/><circle cx="94.2" cy="400" r="4.1" fill="#3c3f41" stroke="#9aa0a4" stroke-width="1.3"/><path d="M91.5,402.6 L96.9,397.4" stroke="#9aa0a4" stroke-width="1.3"/><text x="80.2" y="425.0" font-family="Liberation Sans,sans-serif" font-size="23.4" font-weight="bold" font-style="italic" textLength="18.8" lengthAdjust="spacingAndGlyphs" fill="#3e9ac4" stroke="#3e9ac4" stroke-width="0.55">m</text><polyline points="38.8,438.2 44.2,443.2 38.8,448.2" fill="none" stroke="#adadad" stroke-width="1.6"/><rect x="58.8" y="437.4" width="2.5" height="13.4" fill="#9aa0a4"/><rect x="63" y="437.4" width="2.5" height="13.4" fill="#62b543"/><rect x="67.3" y="435.6" width="2.5" height="15.2" fill="#9aa0a4"/><rect x="71.2" y="437.4" width="2.4" height="13.4" fill="#40b6e0"/><rect x="74.6" y="439.6" width="2" height="11.2" fill="#9aa0a4"/><polyline points="38.8,463.2 44.2,468.2 38.8,473.2" fill="none" stroke="#adadad" stroke-width="1.6"/><rect x="58.8" y="460.6" width="13" height="11.6" fill="#7d868c"/><path d="M61,463.2 l2.6,2.3 l-2.6,2.3" stroke="#3c3f41" stroke-width="1.2" fill="none"/><circle cx="71.7" cy="472.5" r="7" fill="#3c3f41"/><circle cx="71.7" cy="472.5" r="6.1" fill="#40b6e0"/><path d="M71.7,469 v3.8 l2.4,1.8" stroke="#3c3f41" stroke-width="1.4" fill="none"/></svg>
<svg style="left:0;top:0" width="1920" height="1029" viewBox="0 0 1920 1029"><path d="M558.53,324.80 A6.6,6.6 0 1,1 551.78,321.36" fill="none" stroke="#c4c4c4" stroke-width="1.5"/><polygon points="554.3000000000001,322.5 560.1,319.9 558.3000000000001,326.09999999999997" fill="#c4c4c4"/><circle cx="552.7" cy="327.9" r="2.9" fill="#4caf50"/><path d="M558.53,379.80 A6.6,6.6 0 1,1 551.78,376.36" fill="none" stroke="#c4c4c4" stroke-width="1.5"/><polygon points="554.3000000000001,377.5 560.1,374.9 558.3000000000001,381.09999999999997" fill="#c4c4c4"/><circle cx="552.7" cy="382.9" r="2.9" fill="#4caf50"/><path d="M558.53,434.80 A6.6,6.6 0 1,1 551.78,431.36" fill="none" stroke="#c4c4c4" stroke-width="1.5"/><polygon points="554.3000000000001,432.5 560.1,429.9 558.3000000000001,436.09999999999997" fill="#c4c4c4"/><circle cx="552.7" cy="437.9" r="2.9" fill="#4caf50"/><path d="M558.53,489.80 A6.6,6.6 0 1,1 551.78,486.36" fill="none" stroke="#c4c4c4" stroke-width="1.5"/><polygon points="554.3000000000001,487.5 560.1,484.9 558.3000000000001,491.09999999999997" fill="#c4c4c4"/><circle cx="552.7" cy="492.9" r="2.9" fill="#4caf50"/><path d="M574.3,212.9 H585.5 V220.7 L579.9,227.29999999999998 L574.3,220.7Z" fill="#2b2b2b" stroke="#5c5c5c" stroke-width="1.2"/><path d="M576.5999999999999,218.5 H583.2" stroke="#6a6a6a" stroke-width="1.1"/><path d="M574.3,322.90000000000003 H585.5 V330.70000000000005 L579.9,337.3 L574.3,330.70000000000005Z" fill="#2b2b2b" stroke="#5c5c5c" stroke-width="1.2"/><path d="M576.5999999999999,328.5 H583.2" stroke="#6a6a6a" stroke-width="1.1"/><path d="M574.3,388.7 H585.5 V380.9 L579.9,374.3 L574.3,380.9Z" fill="#2b2b2b" stroke="#5c5c5c" stroke-width="1.2"/><path d="M576.5999999999999,383.5 H583.2" stroke="#6a6a6a" stroke-width="1.1"/><path d="M574.3,443.7 H585.5 V435.9 L579.9,429.3 L574.3,435.9Z" fill="#2b2b2b" stroke="#5c5c5c" stroke-width="1.2"/><path d="M576.5999999999999,438.5 H583.2" stroke="#6a6a6a" stroke-width="1.1"/><path d="M574.3,498.7 H585.5 V490.9 L579.9,484.3 L574.3,490.9Z" fill="#2b2b2b" stroke="#5c5c5c" stroke-width="1.2"/><path d="M576.5999999999999,493.5 H583.2" stroke="#6a6a6a" stroke-width="1.1"/><path d="M574.3,553.7 H585.5 V545.9 L579.9,539.3 L574.3,545.9Z" fill="#2b2b2b" stroke="#5c5c5c" stroke-width="1.2"/><path d="M576.5999999999999,548.5 H583.2" stroke="#6a6a6a" stroke-width="1.1"/><path d="M574.3,161.5 V166.6 H585.5 V161.5" fill="#2b2b2b" stroke="#5c5c5c" stroke-width="1.2"/><path d="M576.6,162.8 H583.2" stroke="#6a6a6a" stroke-width="1.1"/><path d="M1775,116 L1782.4,129.2 H1767.6Z" fill="#c9a01f"/><path d="M1775,120.4 v4.2 M1775,125.8 v1.6" stroke="#2b2b2b" stroke-width="1.7"/><path d="M1807,122.6 L1811.2,126.6 L1819.2,117.9" fill="none" stroke="#499c54" stroke-width="2.6"/><path d="M1806,131 l2,-2.4 l2,2.4 l2,-2.4 l2,2.4 l2,-2.4 l2,2.4 l1.6,-2" fill="none" stroke="#d2504c" stroke-width="1.1"/><polyline points="1846.4,125.6 1851.2,120.6 1856,125.6" fill="none" stroke="#b4b4b4" stroke-width="1.5"/><polyline points="1873.1,121.2 1877.9,126.2 1882.7,121.2" fill="none" stroke="#b4b4b4" stroke-width="1.5"/><path d="M1900.4,99 q1.4,-1 1.6,-4.6 q0.2,-6.6 5,-6.8 q4.8,0.2 5,6.8 q0.2,3.6 1.6,4.6z" fill="#afb1b3"/><rect x="1905" y="100.2" width="4" height="1.5" fill="#afb1b3"/><circle cx="1911.9" cy="89.2" r="4.2" fill="#3c3f41"/><circle cx="1911.9" cy="89.2" r="3.2" fill="#e05555"/><path d="M1907.1,223.9 L1906.9,224.0 L1906.7,224.0 L1906.4,224.0 L1906.1,223.9 L1905.9,223.8 L1905.6,223.5 L1905.5,223.2 L1905.3,222.9 L1905.3,222.5 L1905.4,222.1 L1905.6,221.7 L1905.9,221.3 L1906.2,221.0 L1906.7,220.8 L1907.2,220.7 L1907.7,220.7 L1908.3,220.8 L1908.8,221.1 L1909.2,221.5 L1909.6,222.0 L1909.9,222.6 L1910.0,223.3 L1909.9,223.9 L1909.7,224.6 L1909.4,225.3 L1908.9,225.8 L1908.2,226.2 L1907.5,226.5 L1906.7,226.6 L1905.8,226.6 L1905.0,226.3 L1904.3,225.8 L1903.6,225.2 L1903.1,224.4 L1902.8,223.6 L1902.7,222.6 L1902.8,221.6 L1903.1,220.7 L1903.7,219.8 L1904.4,219.1 L1905.4,218.5 L1906.4,218.1 L1907.5,218.0 L1908.6,218.2 L1909.7,218.6 L1910.7,219.2 L1911.5,220.1 L1912.1,221.2 L1912.5,222.3 L1912.6,223.6 L1912.4,224.9 L1912.0,226.1 L1911.2,227.2 L1910.2,228.1 L1909.0,228.8 L1907.7,229.2 L1906.3,229.3 L1904.9,229.1 L1903.5,228.5 L1902.3,227.7" fill="none" stroke="#afb1b3" stroke-width="1.4"/><g fill="#afb1b3"><ellipse cx="1907" cy="337.6" rx="6.8" ry="2.3"/><path d="M1900.2,339.6 q6.8,3.4 13.6,0 v2.6 q-6.8,3.4 -13.6,0z M1900.2,343.6 q6.8,3.4 13.6,0 v2.6 q-6.8,3.4 -13.6,0z M1900.2,347.6 q6.8,3.4 13.6,0 v1.6 q-6.8,3.4 -13.6,0z"/></g><path d="M1901.8,452.6 L1908.9,443.8 L1912.2,452.6" stroke="#afb1b3" stroke-width="1.3" fill="none"/><g fill="#afb1b3"><circle cx="1908.9" cy="443.8" r="2.8"/><circle cx="1901.8" cy="452.7" r="2.8"/><circle cx="1912.2" cy="452.7" r="2.8"/></g><text x="1899.1" y="562.0" font-family="Liberation Sans,sans-serif" font-size="20.124" font-weight="bold" font-style="italic" textLength="16.2" lengthAdjust="spacingAndGlyphs" fill="#afb1b3" stroke="#afb1b3" stroke-width="0.55">m</text><path d="M1900.4,876.6 L1907,875 L1913.6,876.6 V883 q-1,4.6 -6.6,6.9 q-5.6,-2.3 -6.6,-6.9z" fill="#afb1b3"/><path d="M1907.3,877 L1911.6,878 V883 q-0.6,2.8 -4.3,4.6z" fill="#3c3f41"/><path d="M7.2,132.2 h5 l1.6,2 h7.6 v9.8 h-14.2z" fill="#afb1b3"/><g fill="#afb1b3"><rect x="14.6" y="822.4" width="5.4" height="5.2"/><rect x="14.6" y="828.8" width="5.4" height="5" opacity="0.55"/><rect x="8.2" y="828.8" width="5.2" height="5"/></g><path d="M8.6,936 h11.6 v13.8 l-5.8,-4.6 l-5.8,4.6z" fill="#afb1b3"/></svg>
<svg style="left:0;top:0" width="1920" height="1029" viewBox="0 0 1920 1029"><path d="M115.5,626.1 h14.6 v12.6 h-2.2 v-10.4 h-12.4z" fill="#6e7a82"/><rect x="111.9" y="629.7" width="14.9" height="12.9" fill="#6e7a82"/><rect x="113.80000000000001" y="633.0" width="11.1" height="7.6" fill="#3d89a8"/><circle cx="128.5" cy="642.4" r="2.6" fill="#00e000"/><path d="M204.5,631.9 L211.89999999999998,639.3000000000001 M211.89999999999998,631.9 L204.5,639.3000000000001" stroke="#7d8794" stroke-width="1.2" fill="none"/><path fill-rule="evenodd" fill="#afb1b3" d="M1842.17,629.45 L1842.61,627.36 L1845.79,627.36 L1846.23,629.45 L1848.16,630.56 L1850.20,629.90 L1851.78,632.66 L1850.20,634.09 L1850.20,636.31 L1851.78,637.74 L1850.20,640.50 L1848.16,639.84 L1846.23,640.95 L1845.79,643.04 L1842.61,643.04 L1842.17,640.95 L1840.24,639.84 L1838.20,640.50 L1836.62,637.74 L1838.20,636.31 L1838.20,634.09 L1836.62,632.66 L1838.20,629.90 L1840.24,630.56Z M1841.30,635.20 a2.9,2.9 0 1,0 5.8,0 a2.9,2.9 0 1,0 -5.8,0Z"/><rect x="1868.3" y="633.9" width="15.6" height="2.4" fill="#afb1b3"/><g fill="#afb1b3"><rect x="1870.2" y="664" width="7.4" height="5.6"/><rect x="1878.8" y="664" width="6.4" height="5.6"/><rect x="1870.2" y="670.8" width="15" height="4.8"/></g><polygon fill="#afb1b3" points="1882.4,677 1889,677 1885.7,680.6"/><path d="M46.6,665.6 a6,6 0 1,0 1.4,11.6" fill="none" stroke="#499c54" stroke-width="2.7"/><polygon points="46.2,661.4 53.6,667.4 46.2,672.2" fill="#499c54"/><rect x="46.4" y="672.6" width="6.8" height="6.6" fill="#afb1b3"/><path transform="translate(-2,-0.6)" d="M38.6,709.6 L46.2,702 q-1.4,-3.6 1.2,-6 q2.4,-2 5.2,-1 l-3.4,3.4 l0.7,2.6 l2.6,0.7 l3.4,-3.4 q1,2.8 -1,5.2 q-2.4,2.6 -6,1.2 L41.4,712.4z" fill="#afb1b3"/><rect x="33" y="722.6" width="23.6" height="1" fill="#555759"/><rect x="38.6" y="736.4" width="3.6" height="13.8" fill="#499c54"/><polygon fill="#499c54" points="44.4,736.2 53.8,743.3 44.4,750.4"/><rect x="40" y="768.6" width="3.8" height="13.4" fill="#606365"/><rect x="46.4" y="768.6" width="3.8" height="13.4" fill="#606365"/><rect x="38.9" y="802.8" width="12.5" height="12.5" fill="#c75450"/><rect x="33" y="829" width="23.6" height="1" fill="#555759"/><circle cx="49" cy="847.2" r="5.2" fill="#c75450"/><circle cx="44.2" cy="851.2" r="7.2" fill="#3c3f41"/><circle cx="44.2" cy="851.2" r="6.1" fill="#c75450"/><circle cx="44.9" cy="882.9" r="6.2" fill="#c75450"/><path d="M37.4,891.2 L53.4,876.2" stroke="#3c3f41" stroke-width="4"/><path d="M37.8,890.4 L52.6,876.2" stroke="#afb1b3" stroke-width="1.5"/><rect x="33" y="903" width="23.6" height="1" fill="#555759"/><path d="M35.9,919 h4.6 l1.6,-2.8 h5.8 l1.6,2.8 h4.6 v12.6 h-18.2z" fill="#afb1b3"/><circle cx="45" cy="925" r="4.1" fill="#3c3f41"/><circle cx="45" cy="925" r="2.1" fill="#afb1b3"/><path d="M42,952.2 l2.8,2.8 l-2.8,2.8 M46.6,952.2 l2.8,2.8 l-2.8,2.8" fill="none" stroke="#afb1b3" stroke-width="1.2"/><circle cx="169.2" cy="674.8" r="4.5" fill="#f2a724"/><path d="M169.2,672 v4.8 M167,675 l2.2,2.2 l2.2,-2.2" stroke="#3c3f41" stroke-width="1.1" fill="none"/><rect x="246.2" y="663.9" width="15.6" height="2.7" fill="#afb1b3"/><rect x="246.2" y="668.5" width="15.6" height="4.2" fill="#389fd6"/><rect x="246.2" y="675" width="15.6" height="2.7" fill="#afb1b3"/><rect x="274" y="658" width="1" height="23.6" fill="#555759"/><rect x="287.4" y="675" width="15.4" height="2.7" fill="#afb1b3"/><path d="M287.6,670.4 L294.6,663.8 L300.6,669.8" fill="none" stroke="#389fd6" stroke-width="2.2"/><polygon points="303.2,664.6 303.2,672.6 295.2,672.6" fill="#389fd6"/><rect x="320.5" y="675" width="15.2" height="2.7" fill="#afb1b3"/><path d="M328.1,661.2 V669" stroke="#389fd6" stroke-width="2.4"/><polygon points="322.6,667 333.6,667 328.1,673.2" fill="#389fd6"/><rect x="352.4" y="675" width="15.4" height="2.7" fill="#afb1b3"/><path d="M360.1,673.6 V666.4" stroke="#389fd6" stroke-width="2.4"/><polygon points="354.6,668.4 365.6,668.4 360.1,662.2" fill="#389fd6"/><path d="M385.8,663 L392,669.2" stroke="#389fd6" stroke-width="2.4"/><polygon points="394.8,663.6 394.8,672 386.4,672" fill="#389fd6"/><path d="M395.6,669.2 h2.2 q0.9,0 0.9,0.9 v7.6 q0,0.9 -0.9,0.9 h-2.2 M402,669.2 h-2.2 q-0.9,0 -0.9,0.9 v7.6 q0,0.9 0.9,0.9 h2.2" fill="none" stroke="#afb1b3" stroke-width="1.1"/><rect x="413" y="658" width="1" height="23.6" fill="#555759"/><path d="M426.3,662.2 h15.6 v15.5 h-15.6z M428.3,666.8 v1.6 h11.6 v-1.6z M428.3,670 v2.2 h2.8 v-2.2z M432.7,670 v2.2 h2.8 v-2.2z M437.1,670 v2.2 h2.8 v-2.2z M428.3,673.6 v2.2 h2.8 v-2.2z M432.7,673.6 v2.2 h2.8 v-2.2z M437.1,673.6 v2.2 h2.8 v-2.2z" fill="#afb1b3" fill-rule="evenodd"/><path d="M458.4,665.2 h6 M458.4,670.5 h4.4 M458.4,675.8 h6 M473.6,665.2 h-5 q-1.6,0 -2.2,1.6 l-2.2,7.4 q-0.6,1.6 -2.2,1.6 M468.4,670.5 h5.2 M467.4,675.8 h6.2" fill="none" stroke="#5d6063" stroke-width="1.7"/><path d="M77.4,741.4 L82.6,746.4 L93.2,735" fill="none" stroke="#c8622d" stroke-width="2.4"/><path d="M345.2,735 h14.6 l-5.4,6.4 v6.6 h-3.8 v-6.6z" fill="#e8e8e8"/><polygon fill="#9a9da0" points="379.5,739 389.8,739 384.65,745"/><path d="M79.8,792.2 L76,796 L79.8,799.8 M76.2,796 h9.6 a3.9,3.9 0 1,1 0,7.8 h-5" fill="none" stroke="#e6eaf2" stroke-width="1.4"/><path d="M384.5,950.1 L391.5,957.1 M391.5,950.1 L384.5,957.1" stroke="#7a7d80" stroke-width="1.1" fill="none"/><polyline points="415.7,732.2 421.09999999999997,737.2 415.7,742.2" fill="none" stroke="#adadad" stroke-width="1.6"/><polyline points="415.7,757.2 421.09999999999997,762.2 415.7,767.2" fill="none" stroke="#adadad" stroke-width="1.6"/><polyline points="415.7,857.2 421.09999999999997,862.2 415.7,867.2" fill="none" stroke="#adadad" stroke-width="1.6"/><g fill="#b9913e"><rect x="437.4" y="730.3" width="12.9" height="3"/><rect x="437.4" y="735.2" width="12.9" height="3.7"/><rect x="437.4" y="740.8" width="12.9" height="3.4"/></g><circle cx="443.9" cy="763" r="9" fill="#b38a3f"/><path d="M441.2,768.6 v-9.2 M441.2,762.8 a2.9,3.1 0 1,1 0,0.4" fill="none" stroke="#4f4123" stroke-width="1.5"/><circle cx="443.9" cy="788" r="9" fill="#b38a3f"/><path d="M441.2,793.6 v-9.2 M441.2,787.8 a2.9,3.1 0 1,1 0,0.4" fill="none" stroke="#4f4123" stroke-width="1.5"/><circle cx="443.9" cy="813" r="9" fill="#b38a3f"/><path d="M441.2,818.6 v-9.2 M441.2,812.8 a2.9,3.1 0 1,1 0,0.4" fill="none" stroke="#4f4123" stroke-width="1.5"/><ellipse cx="438.70000000000005" cy="838.8000000000001" rx="3.7" ry="3.5" fill="none" stroke="#9aa7b0" stroke-width="1.7"/><ellipse cx="449.1" cy="838.8000000000001" rx="3.7" ry="3.5" fill="none" stroke="#9aa7b0" stroke-width="1.7"/><path d="M434.1,836.6 q1,-2.4 4.6,-2.4 h10.4 q3.6,0 4.6,2.4" fill="none" stroke="#9aa7b0" stroke-width="1.5"/><ellipse cx="438.70000000000005" cy="863.8000000000001" rx="3.7" ry="3.5" fill="none" stroke="#9aa7b0" stroke-width="1.7"/><ellipse cx="449.1" cy="863.8000000000001" rx="3.7" ry="3.5" fill="none" stroke="#9aa7b0" stroke-width="1.7"/><path d="M434.1,861.6 q1,-2.4 4.6,-2.4 h10.4 q3.6,0 4.6,2.4" fill="none" stroke="#9aa7b0" stroke-width="1.5"/><path d="M1571.6,698 v12 M1565.4,704 h12.4" stroke="#5f6265" stroke-width="1.5"/><circle cx="1572.8" cy="713" r="2" fill="none" stroke="#5f6265" stroke-width="1"/><circle cx="1578.4" cy="713" r="2" fill="none" stroke="#5f6265" stroke-width="1"/><polygon fill="#9a9da0" points="1598,703.4 1608.8,703.4 1603.4,709.4"/><circle cx="1643" cy="741.6" r="5.2" fill="none" stroke="#9a9da0" stroke-width="1.4"/><path d="M1646.8,745.6 L1651.4,750.4" stroke="#9a9da0" stroke-width="1.5"/><path fill-rule="evenodd" fill="#afb1b3" d="M1874.37,737.65 L1874.89,735.95 L1877.91,735.95 L1878.43,737.65 L1880.36,738.76 L1882.10,738.37 L1883.61,740.98 L1882.40,742.29 L1882.40,744.51 L1883.61,745.82 L1882.10,748.43 L1880.36,748.04 L1878.43,749.15 L1877.91,750.85 L1874.89,750.85 L1874.37,749.15 L1872.44,748.04 L1870.70,748.43 L1869.19,745.82 L1870.40,744.51 L1870.40,742.29 L1869.19,740.98 L1870.70,738.37 L1872.44,738.76Z M1873.50,743.40 a2.9,2.9 0 1,0 5.8,0 a2.9,2.9 0 1,0 -5.8,0Z"/><polygon fill="#afb1b3" points="1882,750.6 1888.6,750.6 1885.3,754.2"/><polygon fill="#afb1b3" points="1837.4,773.2 1848.4,773.2 1842.9,779.2"/></svg>
<svg style="left:0;top:0" width="1920" height="1029" viewBox="0 0 1920 1029"><g fill="none" stroke="#afb1b3" stroke-width="1.7"><path d="M46,977.4 V986.6 M52.2,978.4 q0,4.4 -6,5.4"/></g><g fill="#afb1b3"><circle cx="46" cy="976.4" r="2"/><circle cx="46" cy="987.2" r="2"/><circle cx="52.2" cy="977.6" r="2"/></g><polygon fill="#afb1b3" points="186.8,976.2 197.2,982.3 186.8,988.4"/><g transform="translate(254.9,974.6) scale(0.8)"><path d="M4.8,0.5 L7.6,3.3 M12.3,0.5 L9.5,3.3 M1.2,5.9 H16 M1.2,10.1 H16 M1.2,14.2 H16" stroke="#afb1b3" stroke-width="1.9" stroke-linecap="round" fill="none"/><path d="M8.55,2.4 q4.9,0 4.9,6 v3.6 q0,5.4 -4.9,5.4 q-4.9,0 -4.9,-5.4 v-3.6 q0,-6 4.9,-6z" fill="#afb1b3"/><rect x="6.4" y="7.4" width="4.3" height="1.3" fill="#2d2f30"/><rect x="6.4" y="11.3" width="4.3" height="1.3" fill="#2d2f30"/></g><circle cx="267.4" cy="987.8" r="3.1" fill="#2d2f30"/><circle cx="267.4" cy="987.8" r="2.4" fill="#00f000"/><g fill="#afb1b3"><rect x="343.2" y="976.6" width="2.4" height="2.2"/><rect x="347" y="976.6" width="9.4" height="2.2"/><rect x="343.2" y="980.6" width="2.4" height="2.2"/><rect x="347" y="980.6" width="9.4" height="2.2"/><rect x="343.2" y="984.6" width="2.4" height="2.2"/><rect x="347" y="984.6" width="9.4" height="2.2"/></g><circle cx="434.5" cy="981.6" r="6.2" fill="#afb1b3"/><path d="M434.5,977.8 v4.6 M434.5,983.9 v1.7" stroke="#3c3f41" stroke-width="1.8"/><rect x="531.8" y="975.4" width="14.6" height="12.4" fill="#afb1b3"/><path d="M534.4,978.4 l3,2.6 l-3,2.6 M539.4,984.4 h4.2" stroke="#3c3f41" stroke-width="1.4" fill="none"/><circle cx="635" cy="980.6" r="5.6" fill="none" stroke="#afb1b3" stroke-width="1.5"/><path d="M635,976.8 v4 l-2.2,1.6" stroke="#afb1b3" stroke-width="1.3" fill="none"/><polygon points="635.6,976.6 647.6,984 635.6,991.4" fill="#3c3f41"/><polygon points="637,978.6 645.4,984 637,989.4" fill="#afb1b3"/><path d="M724,975.2 h8.4 l4,6.4 l-4,6.4 h-8.4 l-4,-6.4z" fill="#afb1b3"/><path d="M726.4,978.4 l5.2,3.2 l-5.2,3.2z" fill="#3c3f41"/><g transform="translate(815.2,974.8) scale(0.82)" fill="#afb1b3"><polygon points="0,6.4 10.2,0 12.3,3.3 2.1,9.8"/><polygon points="6.3,5.6 9.1,3.8 19.3,15.9 16.6,18.2"/></g><rect x="18.9" y="1001" width="11.6" height="11" fill="none" stroke="#afb1b3" stroke-width="1.2"/><path d="M16,1003.6 v11 h11.6" fill="none" stroke="#afb1b3" stroke-width="1.2"/><rect x="1862.8" y="1006.6" width="10.4" height="8" fill="#afb1b3"/><path d="M1860.2,1007 v-3 a2.7,2.7 0 0,1 5.4,0 v3" fill="none" stroke="#afb1b3" stroke-width="1.5"/><circle cx="1898.2" cy="1008" r="7.6" fill="#afb1b3"/><path d="M1898.2,1003.4 v5.4 M1898.2,1010.6 v2" stroke="#3c3f41" stroke-width="2"/></svg>
</div></body></html>
